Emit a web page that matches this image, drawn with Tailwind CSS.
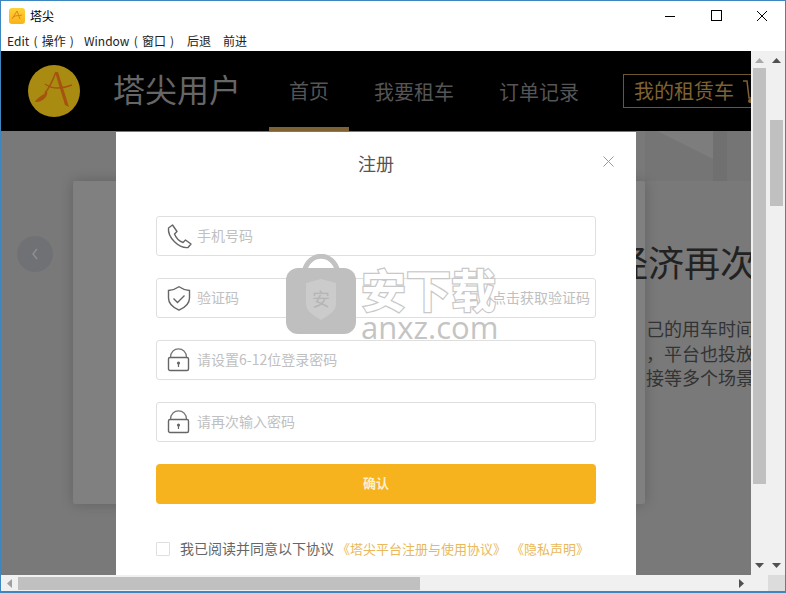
<!DOCTYPE html>
<html lang="zh-CN">
<head>
    <meta charset="UTF-8">
    <script src="https://cdn.jsdelivr.net/npm/@tailwindcss/browser@4"></script>
    <title>塔尖</title>
</head>
<body class="w-[786px] h-[593px] overflow-hidden bg-white font-['Noto_Sans_CJK_SC','Noto_Sans',sans-serif]">
<div class="relative flex flex-col w-full h-full border border-[#3c87c0] border-b-2">

    <!-- title bar -->
    <div class="flex items-center h-[29px] shrink-0">
        <svg class="ml-[8px] w-[16px] h-[16px]" viewBox="0 0 16 16">
            <defs><linearGradient id="ico" x1="0" y1="0" x2="0" y2="1"><stop offset="0" stop-color="#fdd23a"/><stop offset="1" stop-color="#f9b414"/></linearGradient></defs>
            <rect width="16" height="16" rx="3" fill="url(#ico)"/>
            <path d="M3 11 L8 3 L11 11 M4 9 C7 7 10 8 13 7" fill="none" stroke="#e0811c" stroke-width="1"/>
        </svg>
        <span class="ml-[5px] text-[12px] text-black">塔尖</span>
        <div class="ml-auto flex items-center">
            <svg class="w-[46px] h-[29px]" viewBox="0 0 46 29"><path d="M18 15.5H28" stroke="#000"/></svg>
            <svg class="w-[46px] h-[29px]" viewBox="0 0 46 29"><rect x="18.5" y="9.5" width="10" height="10" fill="none" stroke="#000"/></svg>
            <svg class="w-[46px] h-[29px]" viewBox="0 0 46 29"><path d="M18 10L28 20M28 10L18 20" stroke="#000"/></svg>
        </div>
    </div>

    <!-- menu bar -->
    <div class="flex items-center h-[21px] shrink-0 pl-[6px] text-[12px] text-[#222] [word-spacing:1.5px] whitespace-nowrap">
        <span class="w-[77px]">Edit ( 操作 )</span>
        <span class="w-[103px]">Window ( 窗口 )</span>
        <span class="w-[36px]">后退</span>
        <span>前进</span>
    </div>

    <div class="flex flex-1 min-h-0">
        <!-- page -->
        <div class="relative w-[750px] shrink-0 overflow-hidden bg-[#797979]">
            <header class="flex items-center h-[80px] bg-black whitespace-nowrap">
                <svg class="ml-[27px] w-[52px] h-[52px] shrink-0" viewBox="0 0 52 52">
                    <circle cx="26" cy="26" r="26" fill="#a98b12"/>
                    <path d="M27 7 L30 7 L41 42 L37 40Z" fill="#a5540f"/>
                    <path d="M28 7 C25 15 21 23 17 28" fill="none" stroke="#a5540f" stroke-width="1.6"/>
                    <path d="M17 19 C24 24 34 24 44 20" fill="none" stroke="#a5540f" stroke-width="1.4"/>
                    <path d="M7 37 C9 32 15 31 19 26 C21 31 14 38 7 37Z" fill="#a5540f"/>
                </svg>
                <h1 class="ml-[33px] w-[156px] shrink-0 pb-[6px] text-[32px] leading-none text-[#666]">塔尖用户</h1>
                <nav class="flex h-full shrink-0">
                    <a class="flex items-center justify-center w-[80px] h-full border-b-4 border-[#7f6233] pt-[4px] text-[20px] text-[#555]">首页</a>
                    <a class="flex items-center ml-[25px] w-[80px] pt-[2px] text-[20px] text-[#555]">我要租车</a>
                    <a class="flex items-center ml-[45px] w-[80px] pt-[2px] text-[20px] text-[#555]">订单记录</a>
                </nav>
                <div class="flex items-center shrink-0 ml-[44px] w-[150px] h-[34px] pl-[10px] border border-[#6f5630] text-[20px] text-[#7f6233]">
                    我的租赁车
                    <svg class="ml-[8px] w-[20px] h-[26px] shrink-0" viewBox="0 0 20 26">
                        <path d="M1 3H5L7 20H18" fill="none" stroke="#7f6233" stroke-width="1.5"/>
                        <circle cx="8" cy="23" r="2" fill="#7f6233"/>
                    </svg>
                </div>
            </header>

            <!-- carousel behind the dialog -->
            <svg class="absolute left-[636px] top-[80px] w-[114px] h-[50px]" viewBox="0 0 114 50">
                <path d="M8 0H114V50H8Z" fill="#757575"/>
                <path d="M20 0H76V28Z" fill="#7d7d7d"/>
                <path d="M76 0H90V50H76Z" fill="#707070"/>
            </svg>
            <div class="h-[50px]"></div>
            <div class="relative ml-[72px] w-[572px] h-[323px] rounded-[2px] bg-[#808080] shadow-[0_0_14px_rgba(0,0,0,0.2)]">
                <div class="ml-[539px] pt-[56px] text-[36px] leading-[48px] text-[#222] whitespace-nowrap">经济再次</div>
            </div>
            <div class="absolute left-[16px] top-[185px] flex items-center justify-center w-[36px] h-[36px] rounded-full bg-[#6f7174]">
                <svg class="w-[10px] h-[14px]" viewBox="0 0 10 14"><path d="M7 2L3 7L7 12" fill="none" stroke="#8d8f91" stroke-width="1.5"/></svg>
            </div>
            <div class="absolute left-[645px] top-[265px] w-[105px] text-[18px] leading-[24.5px] text-[#333] whitespace-nowrap">
                <p>己的用车时间</p>
                <p>，平台也投放</p>
                <p>接等多个场景</p>
            </div>

            <!-- register dialog -->
            <div class="absolute left-[115px] top-[81px] w-[520px] h-[443px] bg-white px-[40px]">
                <h2 class="pt-[18px] text-center text-[18px] leading-[26px] text-[#555]">注册</h2>
                <svg class="absolute right-[22px] top-[24px] w-[11px] h-[11px]" viewBox="0 0 11 11"><path d="M0.5 0.5L10.5 10.5M10.5 0.5L0.5 10.5" stroke="#999"/></svg>

                <div class="mt-[40px] flex flex-col gap-[22px]">
                    <div class="flex items-center h-[40px] pl-[10px] border border-[#dfdfdf] rounded-[3px]">
                        <svg class="w-[25px] h-[25px] shrink-0" viewBox="0 0 25 25"><path d="M1.5 4 L5.5 1 L10 7.5 L7.5 10 C9 14 12 17 16 18.5 L18.5 16 L24 20 L21 23.5 C12 24.5 0.5 13.5 1.5 4Z" fill="none" stroke="#666" stroke-width="1.4" stroke-linejoin="round"/></svg>
                        <span class="ml-[5px] pb-[2px] text-[14px] text-[#c0c0c0]">手机号码</span>
                    </div>
                    <div class="flex items-center h-[40px] pl-[10px] pr-[5px] border border-[#dfdfdf] rounded-[3px]">
                        <svg class="w-[25px] h-[25px] shrink-0" viewBox="0 0 25 25"><path d="M12 0.8 C15 3 18 4 22.5 4.5 V12 C22.5 18 18 21.5 12 24.2 C6 21.5 1.5 18 1.5 12 V4.5 C6 4 9 3 12 0.8Z" fill="none" stroke="#666" stroke-width="1.4"/><path d="M6.5 12.5 L10.5 16.5 L17.5 9.5" fill="none" stroke="#666" stroke-width="1.4"/></svg>
                        <span class="ml-[5px] pb-[2px] text-[14px] text-[#c0c0c0]">验证码</span>
                        <span class="ml-auto pb-[2px] text-[14px] text-[#c0c0c0]">点击获取验证码</span>
                    </div>
                    <div class="flex items-center h-[40px] pl-[10px] border border-[#dfdfdf] rounded-[3px]">
                        <svg class="w-[25px] h-[25px] shrink-0" viewBox="0 0 25 25"><path d="M3.5 9.5 C3.5 -2 19.5 -2 19.5 9.5" fill="none" stroke="#777" stroke-width="1.2"/><rect x="1.5" y="9.5" width="20" height="13" rx="1.5" fill="none" stroke="#666" stroke-width="1.4"/><circle cx="11.5" cy="15" r="1.6" fill="#666"/><path d="M11.5 15V19" stroke="#666" stroke-width="1.2"/></svg>
                        <span class="ml-[5px] pb-[2px] text-[14px] text-[#c0c0c0]">请设置6-12位登录密码</span>
                    </div>
                    <div class="flex items-center h-[40px] pl-[10px] border border-[#dfdfdf] rounded-[3px]">
                        <svg class="w-[25px] h-[25px] shrink-0" viewBox="0 0 25 25"><path d="M3.5 9.5 C3.5 -2 19.5 -2 19.5 9.5" fill="none" stroke="#777" stroke-width="1.2"/><rect x="1.5" y="9.5" width="20" height="13" rx="1.5" fill="none" stroke="#666" stroke-width="1.4"/><circle cx="11.5" cy="15" r="1.6" fill="#666"/><path d="M11.5 15V19" stroke="#666" stroke-width="1.2"/></svg>
                        <span class="ml-[5px] pb-[2px] text-[14px] text-[#c0c0c0]">请再次输入密码</span>
                    </div>
                </div>

                <button class="block mt-[22px] w-full h-[40px] pb-[2px] rounded-[4px] bg-[#f6b31e] text-[13px] font-bold text-[#fdf0d2]">确认</button>

                <div class="flex items-center mt-[34px] text-[13px] whitespace-nowrap">
                    <span class="w-[14px] h-[14px] border border-[#dfdfdf] rounded-[1px]"></span>
                    <span class="ml-[10px] text-[14px] text-[#666]">我已阅读并同意以下协议</span>
                    <span class="ml-[3px] text-[#e9b95a]">《塔尖平台注册与使用协议》</span>
                    <span class="ml-[5px] text-[#e9b95a]">《隐私声明》</span>
                </div>
            </div>

            <!-- download site watermark -->
            <div class="absolute left-[284px] top-[203px] flex items-start">
                <svg class="w-[72px] h-[81px]" viewBox="0 0 72 81">
                    <path d="M19 18 C24 -3 48 -3 53 18" fill="none" stroke="#c2c2c2" stroke-width="5"/>
                    <rect x="1" y="14" width="70" height="66" rx="12" fill="#bfbfbf"/>
                    <path d="M21 29 L36 25 L51 29 V50 C51 58 42 62 36 66 C30 62 21 58 21 50Z" fill="#cbcbcb"/>
                    <text x="36" y="52" font-size="18" text-anchor="middle" fill="#b5b5b5">安</text>
                </svg>
                <div class="ml-[4px] pt-[10px] text-[#c4c4c4]">
                    <div class="text-[45px] leading-[50px] font-bold text-white [-webkit-text-stroke:2.5px_#c8c8c8] [paint-order:stroke_fill] whitespace-nowrap">安下载</div>
                    <div class="-mt-[4px] text-[31px] leading-[34px] font-['Open_Sans',sans-serif]">anxz.com</div>
                </div>
            </div>
        </div>

        <!-- inner scrollbar -->
        <div class="flex flex-col items-center w-[17px] shrink-0 bg-[#f0f0f0]">
            <svg class="mt-[7px] w-[9px] h-[5px]" viewBox="0 0 9 5"><path d="M4.5 0L9 5H0Z" fill="#a8a8a8"/></svg>
            <div class="mt-[5px] w-[13px] h-[416px] bg-[#c0c0c0]"></div>
            <svg class="mt-auto mb-[7px] w-[9px] h-[5px]" viewBox="0 0 9 5"><path d="M4.5 5L9 0H0Z" fill="#505050"/></svg>
        </div>
        <!-- outer scrollbar -->
        <div class="flex flex-col items-center w-[17px] shrink-0 bg-[#f0f0f0]">
            <svg class="mt-[7px] w-[9px] h-[5px]" viewBox="0 0 9 5"><path d="M4.5 0L9 5H0Z" fill="#505050"/></svg>
            <div class="mt-[57px] w-[13px] h-[86px] bg-[#c0c0c0]"></div>
            <svg class="mt-auto mb-[7px] w-[9px] h-[5px]" viewBox="0 0 9 5"><path d="M4.5 5L9 0H0Z" fill="#505050"/></svg>
        </div>
    </div>

    <!-- horizontal scrollbar -->
    <div class="flex items-center h-[16px] shrink-0 bg-[#f0f0f0]">
        <svg class="ml-[6px] w-[5px] h-[9px]" viewBox="0 0 5 9"><path d="M0 4.5L5 0V9Z" fill="#a0a0a0"/></svg>
        <div class="ml-[6px] w-[402px] h-[13px] bg-[#c0c0c0]"></div>
        <svg class="ml-auto mr-[24px] w-[5px] h-[9px]" viewBox="0 0 5 9"><path d="M5 4.5L0 0V9Z" fill="#505050"/></svg>
        <div class="w-[17px] h-full bg-[#dcdcdc]"></div>
    </div>
</div>
</body>
</html>
